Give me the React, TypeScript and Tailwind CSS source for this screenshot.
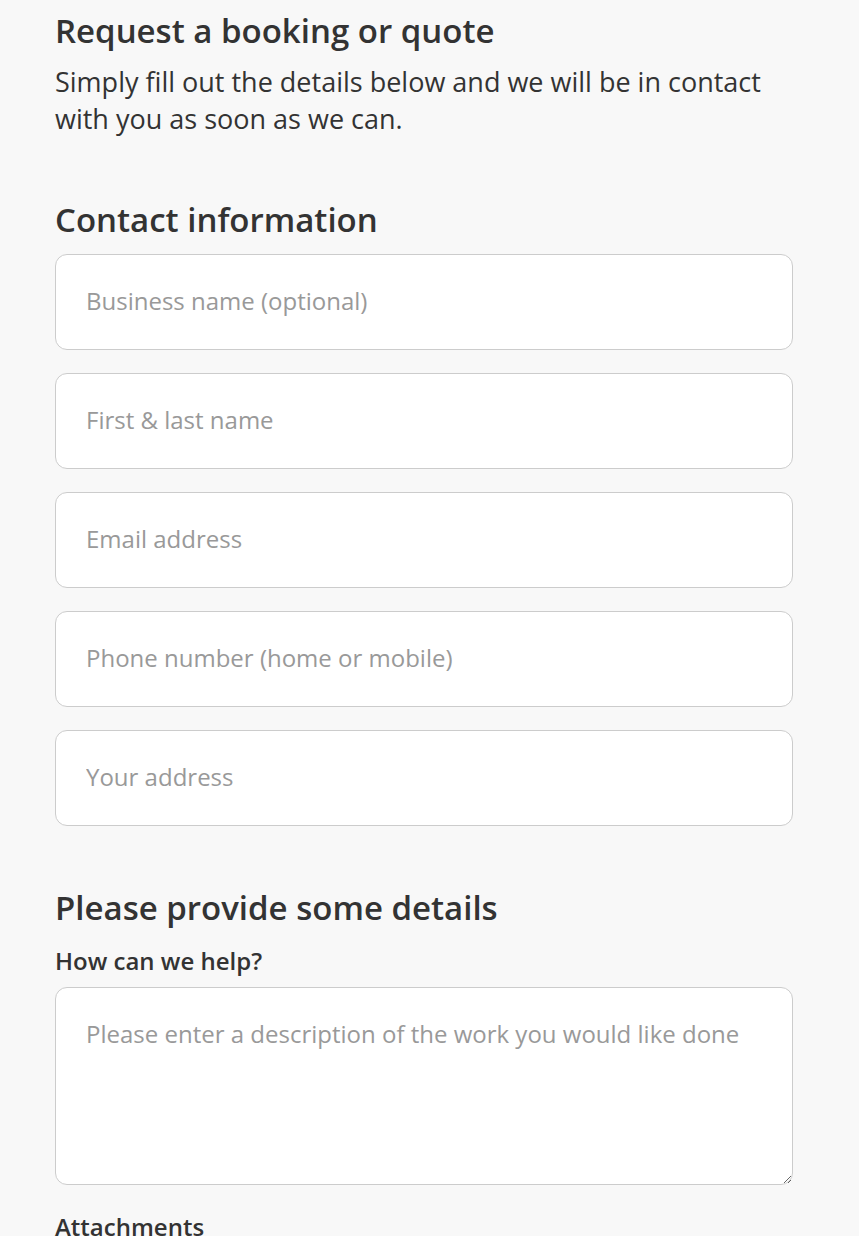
import React from "react";

const fields = [
  "Business name (optional)",
  "First & last name",
  "Email address",
  "Phone number (home or mobile)",
  "Your address",
];

export default function App() {
  return (
    <div className="min-h-screen bg-[#f8f8f8] text-[#333333] font-['Open_Sans',sans-serif]">
      <div className="w-[738px] ml-[55px] pt-[12px]">
        <h1 className="text-[33px] leading-[38px] font-semibold">Request a booking or quote</h1>
        <p className="mt-[13px] text-[27px] leading-[37px]">
          Simply fill out the details below and we will be in contact with you as soon as we can.
        </p>

        <h2 className="mt-[64px] text-[33px] leading-[38px] font-semibold">Contact information</h2>
        <div className="mt-[15px] flex flex-col gap-[23px]">
          {fields.map((f) => (
            <input
              key={f}
              type="text"
              placeholder={f}
              className="h-[96px] w-full rounded-[12px] border border-[#cccccc] bg-white px-[30px] pb-[3px] text-[24px] text-[#333333] placeholder:text-[#999999] outline-none"
            />
          ))}
        </div>

        <h2 className="mt-[63px] text-[33px] leading-[38px] font-semibold">Please provide some details</h2>
        <label className="mt-[19px] block text-[24px] leading-[30px] font-semibold">How can we help?</label>
        <textarea
          placeholder="Please enter a description of the work you would like done"
          className="mt-[11px] block h-[198px] w-full rounded-[12px] border border-[#cccccc] bg-white px-[30px] py-[31px] text-[24px] leading-[30px] text-[#333333] placeholder:text-[#999999] outline-none"
        />
        <h3 className="mt-[27px] text-[24px] leading-[30px] font-semibold">Attachments</h3>
      </div>
    </div>
  );
}
